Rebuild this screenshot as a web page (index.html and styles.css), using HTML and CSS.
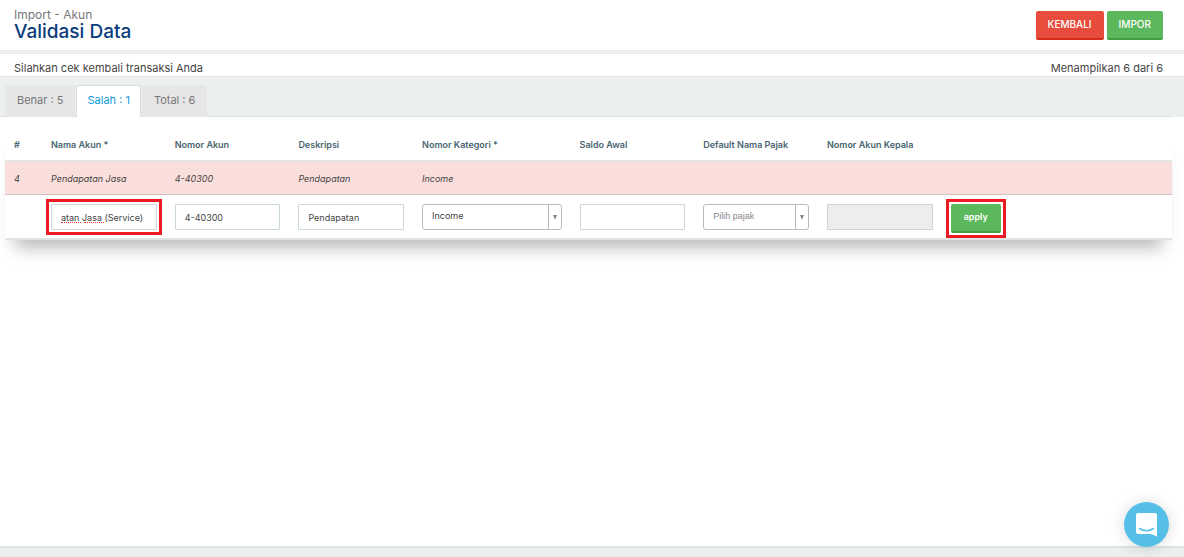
FILE: index.html
```html
<!DOCTYPE html>
<html lang="id">
<head>
    <meta charset="UTF-8">
    <meta name="viewport" content="width=device-width, initial-scale=1.0">
    <title>Validasi Data</title>
    <link rel="stylesheet" href="styles.css">
</head>
<body>
    <header class="page-header">
        <div>
            <div class="breadcrumb">Import - Akun</div>
            <h1>Validasi Data</h1>
        </div>
        <div class="actions">
            <button type="button" class="btn btn-danger">KEMBALI</button>
            <button type="button" class="btn btn-success">IMPOR</button>
        </div>
    </header>

    <div class="info-bar">
        <span>Silahkan cek kembali transaksi Anda</span>
        <span>Menampilkan 6 dari 6</span>
    </div>

    <nav class="tabs">
        <a href="#benar" class="tab">Benar : 5</a>
        <a href="#salah" class="tab active">Salah : 1</a>
        <a href="#total" class="tab">Total : 6</a>
    </nav>

    <main class="content">
        <table class="data-table">
            <colgroup>
                <col class="col-no">
                <col class="col-field">
                <col class="col-field">
                <col class="col-field">
                <col class="col-category">
                <col class="col-field">
                <col class="col-field">
                <col class="col-field">
                <col>
            </colgroup>
            <thead>
                <tr>
                    <th>#</th>
                    <th>Nama Akun *</th>
                    <th>Nomor Akun</th>
                    <th>Deskripsi</th>
                    <th>Nomor Kategori *</th>
                    <th>Saldo Awal</th>
                    <th>Default Nama Pajak</th>
                    <th>Nomor Akun Kepala</th>
                    <th></th>
                </tr>
            </thead>
            <tbody>
                <tr class="row-error">
                    <td>4</td>
                    <td>Pendapatan Jasa</td>
                    <td>4-40300</td>
                    <td>Pendapatan</td>
                    <td>Income</td>
                    <td></td>
                    <td></td>
                    <td></td>
                    <td></td>
                </tr>
                <tr class="row-form">
                    <td></td>
                    <td><div class="field spelling highlight"><input type="text" class="input" aria-label="Nama Akun" value="atan Jasa (Service)"></div></td>
                    <td><input type="text" class="input" aria-label="Nomor Akun" value="4-40300"></td>
                    <td><input type="text" class="input" aria-label="Deskripsi" value="Pendapatan"></td>
                    <td>
                        <div class="field select">
                            <select aria-label="Nomor Kategori">
                                <option>Income</option>
                            </select>
                        </div>
                    </td>
                    <td><input type="text" class="input" aria-label="Saldo Awal"></td>
                    <td>
                        <div class="field select placeholder">
                            <select aria-label="Default Nama Pajak">
                                <option>Pilih pajak</option>
                            </select>
                        </div>
                    </td>
                    <td><input type="text" class="input" aria-label="Nomor Akun Kepala" disabled></td>
                    <td><div class="apply highlight"><button type="button" class="btn btn-success btn-apply">apply</button></div></td>
                </tr>
            </tbody>
        </table>
    </main>

    <footer class="page-footer"></footer>

    <button type="button" class="chat" aria-label="Chat">
        <svg width="22" height="25" viewBox="0 0 22 25">
            <path d="M2 1h17a2 2 0 0 1 2 2v21.500l-6-2.500H2a2 2 0 0 1-2-2V3a2 2 0 0 1 2-2z" fill="#fff"/>
            <path d="M3.500 16.500q7 4.500 14 0" fill="none" stroke="#55bfe8" stroke-width="1.500" stroke-linecap="round"/>
        </svg>
    </button>
</body>
</html>
```

FILE: styles.css
```css
* {
    box-sizing: border-box;
}
body {
    font-family: Inter, "Liberation Sans", sans-serif;
    font-size: 11px;
    color: #444;
    margin: 0;
    min-height: 100vh;
    display: flex;
    flex-direction: column;
    background-color: #fff;
}
.page-header {
    display: flex;
    justify-content: space-between;
    align-items: flex-start;
    padding: 8px 21px 8px 14px;
    border-bottom: 4px solid #ebeff0;
}
.breadcrumb {
    font-size: 12px;
    line-height: 14px;
    color: #777;
}
h1 {
    margin: 0;
    font-size: 19px;
    line-height: 20px;
    font-weight: 500;
    color: #0b3d7c;
}
.actions {
    display: flex;
    gap: 3px;
    padding-top: 3px;
}
.btn {
    font-family: inherit;
    font-size: 10px;
    font-weight: 500;
    line-height: 14px;
    padding: 6px 12px 7px;
    color: #fff;
    border: none;
    border-bottom: 2px solid;
    border-radius: 2px;
    cursor: pointer;
}
.btn-danger {
    background-color: #e74c3c;
    border-bottom-color: #d62c1a;
}
.btn-success {
    background-color: #5cb85c;
    border-bottom-color: #449d44;
}
.info-bar {
    display: flex;
    justify-content: space-between;
    padding: 7px 21px 0 14px;
    line-height: 15px;
    border-bottom: 1px solid #e0e4e5;
}
.tabs {
    display: flex;
    align-items: flex-end;
    gap: 1px;
    height: 40px;
    padding-left: 5px;
    background: linear-gradient(#dcdfe0, #dcdfe0) left bottom / calc(100% - 12px) 1px no-repeat #ebeff0;
}
.tab {
    padding: 8px 12px 9px;
    line-height: 15px;
    color: #777;
    text-decoration: none;
    background-color: #e6e6e6;
    border-radius: 3px 3px 0 0;
}
.tab.active {
    padding: 7px 10px 9px;
    color: #0d9ddb;
    background-color: #fff;
    border: 1px solid #dcdcdc;
    border-bottom: none;
}
.content {
    flex: 1;
    padding: 12px 12px 0 5px;
}
.data-table {
    width: 100%;
    table-layout: fixed;
    border-collapse: separate;
    border-spacing: 0;
    box-shadow: 0 18px 16px -10px rgba(0, 0, 0, 0.27);
}
.col-no {
    width: 37px;
}
.col-field {
    width: 10.6%;
}
.col-category {
    width: 13.5%;
}
.data-table th,
.data-table td {
    padding: 0 9px;
    text-align: left;
    white-space: nowrap;
    font-size: 10px;
}
.data-table th {
    height: 33px;
    font-size: 9px;
    font-weight: 600;
    color: #486571;
    border-bottom: 2px solid #e2e4e4;
}
.row-error td {
    height: 33px;
    font-size: 9px;
    font-style: italic;
    background-color: #fadedb;
    border-bottom: 1px solid #cfbfbe;
}
.data-table .row-error td {
    font-size: 9px;
}
.data-table .row-form td {
    height: 45px;
    padding-top: 9px;
    vertical-align: top;
    border-bottom: 2px solid #e2e4e4;
}
.field {
    position: relative;
}
.input {
    display: block;
    width: 100%;
    height: 26px;
    padding: 0 9px;
    font-family: inherit;
    font-size: 9px;
    color: #444;
    background-color: #fff;
    border: 1px solid #cad7d7;
    border-radius: 1px;
}
.input:disabled {
    background-color: #ededed;
}
/* spell check marks under the first two words */
.spelling::before,
.spelling::after {
    content: "";
    position: absolute;
    left: 10px;
    top: 18px;
    width: 20px;
    border-bottom: 1px dotted #e33;
}
.spelling::after {
    left: 33px;
}
.highlight {
    outline: 3px solid #ed1c24;
    outline-offset: 2px;
}
.select select {
    display: block;
    width: 100%;
    height: 26px;
    padding: 0 20px 4px 9px;
    font-family: inherit;
    font-size: 9px;
    color: #444;
    background-color: #fff;
    border: 1px solid #bbb;
    border-radius: 3px;
    appearance: none;
}
.select::before {
    content: "";
    position: absolute;
    top: 1px;
    right: 13px;
    height: 24px;
    border-left: 1px solid #bbb;
}
.select::after {
    content: "";
    position: absolute;
    top: 11px;
    right: 5px;
    border: 2px solid transparent;
    border-top: 5px solid #888;
    pointer-events: none;
}
.select.placeholder select {
    padding-bottom: 3px;
    font-family: "Liberation Sans", Arial, sans-serif;
    color: #888;
}
.apply {
    width: fit-content;
}
.btn-apply {
    display: block;
    font-size: 9px;
    font-weight: 600;
    padding: 6px 13px 7px;
}
.page-footer {
    height: 11px;
    background-color: #ebeff0;
    border-top: 2px solid #dfe4e5;
}
.chat {
    position: fixed;
    right: 15px;
    bottom: 10px;
    display: flex;
    align-items: center;
    justify-content: center;
    width: 45px;
    height: 45px;
    padding: 0;
    background-color: #55bfe8;
    border: none;
    border-radius: 50%;
    box-shadow: 0 1px 16px rgba(0, 0, 0, 0.15);
    cursor: pointer;
}
```
